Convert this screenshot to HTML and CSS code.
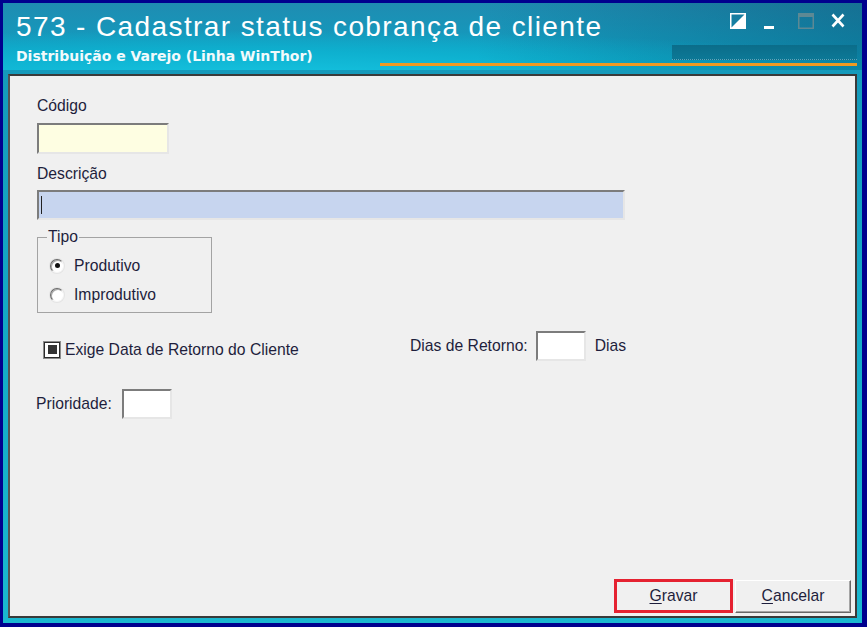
FILE: index.html
```
<!DOCTYPE html>
<html lang="pt-BR">
<head>
    <meta charset="UTF-8">
    <meta name="viewport" content="width=device-width, initial-scale=1.0">
    <title>573 - Cadastrar status cobrança de cliente</title>
    <link rel="stylesheet" href="styles.css">
</head>
<body>
    <div class="window">
        <!-- barra de título -->
        <div class="titlebar">
            <div class="title-row">
                <h1 class="title">573 - Cadastrar status cobrança de cliente</h1>
                <div class="controls">
                    <svg class="ctl ctl-restore" width="16" height="16" viewBox="0 0 16 16">
                        <rect x="0.75" y="0.75" width="14.5" height="14.5" fill="none" stroke="#fff" stroke-width="1.5"/>
                        <polygon points="15,1 15,15 1,15" fill="#fff"/>
                    </svg>
                    <svg class="ctl ctl-min" width="10" height="16" viewBox="0 0 10 16">
                        <rect x="0" y="13" width="10" height="3" fill="#fff"/>
                    </svg>
                    <svg class="ctl ctl-max" width="16" height="16" viewBox="0 0 16 16">
                        <rect x="0.75" y="0.75" width="14.5" height="14.5" fill="none" stroke="#5d8994" stroke-width="1.5"/>
                        <rect x="1" y="1" width="14" height="3" fill="#5d8994"/>
                    </svg>
                    <svg class="ctl ctl-close" width="14" height="16" viewBox="0 0 14 16">
                        <path d="M1.5 1.5 L12.5 13.5 M12.5 1.5 L1.5 13.5" stroke="#fff" stroke-width="2.6" fill="none"/>
                    </svg>
                </div>
            </div>
            <div class="sub-row">
                <div class="subtitle">Distribuição e Varejo (Linha WinThor)</div>
                <div class="user-band"></div>
            </div>
            <div class="accent"></div>
        </div>

        <!-- formulário -->
        <div class="panel">
            <div class="lbl lbl-codigo">Código</div>
            <div class="field field-codigo"></div>

            <div class="lbl lbl-desc">Descrição</div>
            <div class="field field-desc"><span class="caret"></span></div>

            <fieldset class="group">
                <legend>Tipo</legend>
                <div class="radio-row"><span class="radio checked"></span><span class="lbl">Produtivo</span></div>
                <div class="radio-row"><span class="radio"></span><span class="lbl">Improdutivo</span></div>
            </fieldset>

            <div class="row row-retorno">
                <div class="check-group">
                    <span class="check"></span>
                    <span class="lbl">Exige Data de Retorno do Cliente</span>
                </div>
                <div class="dias-group">
                    <span class="lbl">Dias de Retorno:</span>
                    <div class="field field-small"></div>
                    <span class="lbl lbl-dias">Dias</span>
                </div>
            </div>

            <div class="row row-prioridade">
                <span class="lbl">Prioridade:</span>
                <div class="field field-small"></div>
            </div>

            <div class="actions">
                <button class="btn btn-gravar"><u>G</u>ravar</button>
                <button class="btn btn-cancelar"><u>C</u>ancelar</button>
            </div>
        </div>
    </div>
</body>
</html>
```

FILE: styles.css
```
*{
    margin: 0;
    padding: 0;
    box-sizing: border-box;
}
html, body{
    height: 627px;
    overflow: hidden;
}
body{
    background-color: #00008e;
    font-family: "Liberation Sans", Arial, sans-serif;
}
.window{
    height: 620px;
    margin: 3px 5px 4px 3px;
    display: flex;
    flex-direction: column;
    background: linear-gradient(to bottom, #1596b8, #14acc8 60%, #1ab8d0);
}

/* barra de título */
.titlebar{
    height: 67px;
    background:
        linear-gradient(to right, rgba(0,40,70,0) 55%, rgba(0,40,70,.28) 100%),
        radial-gradient(110% 95% at 28% 115%, #16c6e2 0%, #0eb0cf 45%, rgba(12,150,185,0) 78%),
        linear-gradient(to bottom, #1f8cb1, #0ca4c6);
}
.title-row{
    display: flex;
    align-items: flex-start;
    height: 40px;
}
.title{
    padding: 9px 0 0 13px;
    font-weight: normal;
    font-size: 28px;
    line-height: 30px;
    letter-spacing: 1.4px;
    color: #fff;
    white-space: nowrap;
}
.controls{
    margin-left: auto;
    padding-top: 10px;
    display: flex;
}
.ctl-restore{ margin-right: 18px; }
.ctl-min{ margin-right: 24px; }
.ctl-max{ margin-right: 17px; }
.ctl-close{ margin-right: 17px; }

.sub-row{
    display: flex;
    height: 20px;
}
.subtitle{
    padding: 5px 0 0 13px;
    font-family: "DejaVu Sans", sans-serif;
    font-weight: bold;
    font-size: 14px;
    line-height: 16px;
    color: #f2fafc;
    white-space: nowrap;
}
.user-band{
    margin: 2px 5px 0 auto;
    width: 185px;
    height: 15px;
    background: linear-gradient(to bottom, #0b6d8a, #0c7896);
    border-bottom: 1px dotted rgba(200,235,245,.45);
}
.accent{
    height: 3px;
    margin-left: 377px;
    margin-right: 5px;
    background-color: #ee9a22;
}

/* painel do formulário */
.panel{
    flex: 1;
    margin: 4px 5px 5px 5px;
    border: 2px solid #3a3a3a;
    border-left-color: #555;
    background-color: #f0f0f0;
    display: flex;
    flex-direction: column;
    align-items: flex-start;
    padding: 0 4px 3px 27px;
}
.lbl{
    font-size: 15.7px;
    line-height: 18px;
    color: #1e1e3c;
    white-space: nowrap;
}
.lbl-codigo{ margin-top: 21px; }
.lbl-desc{ margin-top: 11px; }

.field{
    border: 2px solid;
    border-color: #7c7c7c #e6e6e6 #e6e6e6 #7c7c7c;
    background-color: #fff;
}
.field-codigo{
    margin-top: 8px;
    width: 132px;
    height: 31px;
    background-color: #fefee2;
}
.field-desc{
    margin-top: 7px;
    width: 588px;
    height: 30px;
    background-color: #c7d5ef;
    padding: 4px 0 0 2px;
}
.caret{
    display: block;
    width: 1px;
    height: 18px;
    background-color: #222;
}
.field-small{
    width: 50px;
    height: 30px;
}

/* grupo Tipo */
.group{
    margin-top: 9px;
    width: 175px;
    border: 1px solid #a3a3a3;
    padding: 6px 0 3px 12px;
}
.group legend{
    margin-left: -3px;
    padding: 0 1px;
    font-size: 15.7px;
    line-height: 16px;
    color: #1e1e3c;
}
.radio-row{
    display: flex;
    align-items: center;
    height: 29px;
}
.radio{
    width: 14px;
    height: 14px;
    margin-right: 10px;
    border-radius: 50%;
    border: 1px solid;
    border-color: #6a6a6a #f6f6f6 #f6f6f6 #6a6a6a;
    background-color: #fff;
    box-shadow: inset 1px 1px 0 #a8a8a8, 0 0 0 1px #e4e4e4;
    display: flex;
    align-items: center;
    justify-content: center;
}
.radio.checked::after{
    content: "";
    width: 5px;
    height: 5px;
    border-radius: 50%;
    background-color: #111;
}

/* linha de retorno */
.row{
    display: flex;
    align-items: center;
}
.row-retorno{
    margin-top: 18px;
    height: 30px;
}
.check-group{
    width: 373px;
    padding-left: 6px;
    padding-top: 7px;
    display: flex;
    align-items: center;
}
.check{
    width: 18px;
    height: 18px;
    margin-right: 4px;
    border: 1px solid #8c8c8c;
    box-shadow: inset 0 0 0 1px #2c2c2c;
    background-color: #fff;
    display: flex;
    align-items: center;
    justify-content: center;
}
.check::after{
    content: "";
    width: 9px;
    height: 9px;
    background-color: #333;
}
.dias-group{
    display: flex;
    align-items: center;
}
.dias-group .field{
    margin-left: 8px;
}
.lbl-dias{
    margin-left: 9px;
}
.row-prioridade{
    margin-top: 28px;
    margin-left: -1px;
}
.row-prioridade .field{
    margin-left: 10px;
}

/* botões */
.actions{
    margin-top: auto;
    align-self: stretch;
    display: flex;
    justify-content: flex-end;
    align-items: center;
    gap: 2px;
}
.btn{
    font-family: "Liberation Sans", Arial, sans-serif;
    font-size: 15.7px;
    color: #1e1e3c;
    background-color: #f0f0f0;
}
.btn u{
    text-underline-offset: 2px;
}
.btn-gravar{
    width: 119px;
    height: 34px;
    border: 3px solid #e52231;
}
.btn-cancelar{
    width: 116px;
    height: 33px;
    border: 1px solid;
    border-color: #fff #686868 #686868 #fff;
    box-shadow: inset -1px -1px 0 #a5a5a5;
}
```
